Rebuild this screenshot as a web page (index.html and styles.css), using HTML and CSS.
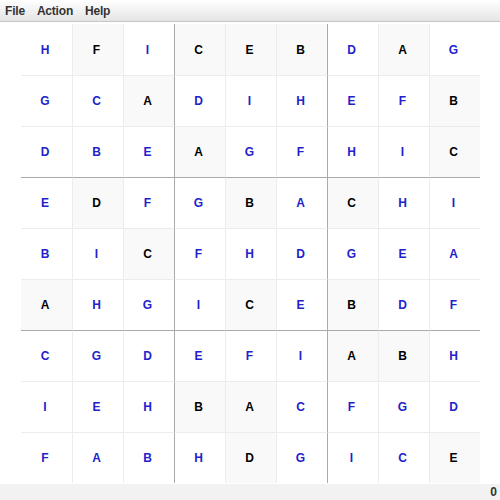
FILE: index.html
```html
<!DOCTYPE html>
<html>
<head>
<meta charset="utf-8">
<link rel="stylesheet" href="styles.css">
</head>
<body>
<div class="app">
  <div class="menubar">
    <span class="menu">File</span>
    <span class="menu">Action</span>
    <span class="menu">Help</span>
  </div>
  <div class="board-area">
    <div class="board">
      <div class="c u">H</div><div class="c g">F</div><div class="c u">I</div><div class="c g">C</div><div class="c g">E</div><div class="c g">B</div><div class="c u">D</div><div class="c g">A</div><div class="c u">G</div>
      <div class="c u">G</div><div class="c u">C</div><div class="c g">A</div><div class="c u">D</div><div class="c u">I</div><div class="c u">H</div><div class="c u">E</div><div class="c u">F</div><div class="c g">B</div>
      <div class="c u">D</div><div class="c u">B</div><div class="c u">E</div><div class="c g">A</div><div class="c u">G</div><div class="c u">F</div><div class="c u">H</div><div class="c u">I</div><div class="c g">C</div>
      <div class="c u">E</div><div class="c g">D</div><div class="c u">F</div><div class="c u">G</div><div class="c g">B</div><div class="c u">A</div><div class="c g">C</div><div class="c u">H</div><div class="c u">I</div>
      <div class="c u">B</div><div class="c u">I</div><div class="c g">C</div><div class="c u">F</div><div class="c u">H</div><div class="c u">D</div><div class="c u">G</div><div class="c u">E</div><div class="c u">A</div>
      <div class="c g">A</div><div class="c u">H</div><div class="c u">G</div><div class="c u">I</div><div class="c g">C</div><div class="c u">E</div><div class="c g">B</div><div class="c u">D</div><div class="c u">F</div>
      <div class="c u">C</div><div class="c u">G</div><div class="c u">D</div><div class="c u">E</div><div class="c u">F</div><div class="c u">I</div><div class="c g">A</div><div class="c g">B</div><div class="c u">H</div>
      <div class="c u">I</div><div class="c u">E</div><div class="c u">H</div><div class="c g">B</div><div class="c g">A</div><div class="c u">C</div><div class="c u">F</div><div class="c u">G</div><div class="c u">D</div>
      <div class="c u">F</div><div class="c u">A</div><div class="c u">B</div><div class="c u">H</div><div class="c g">D</div><div class="c u">G</div><div class="c u">I</div><div class="c u">C</div><div class="c g">E</div>
    </div>
  </div>
  <div class="statusbar"><span class="status">0</span></div>
</div>
</body>
</html>
```
FILE: styles.css
```css
html, body {
  margin: 0;
  padding: 0;
  background: #ffffff;
}
.app {
  width: 500px;
  height: 500px;
  display: flex;
  flex-direction: column;
  font-family: "Liberation Sans", Arial, sans-serif;
  font-weight: bold;
  font-size: 12px;
}
.menubar {
  height: 21px;
  border-bottom: 1px solid #c6c6c6;
  background: linear-gradient(#ffffff, #e4e4e4);
  display: flex;
  align-items: center;
  padding-left: 5px;
  gap: 12px;
  color: #333333;
}
.menu {
  letter-spacing: -0.2px;
}
.board-area {
  flex: 1;
  display: flex;
  justify-content: center;
  padding-top: 2px;
}
.board {
  display: grid;
  grid-template-columns: repeat(9, 51px);
  grid-template-rows: repeat(9, 51px);
  width: 459px;
  height: 459px;
}
.c {
  box-sizing: border-box;
  display: flex;
  align-items: center;
  justify-content: center;
  background: #ffffff;
  font-size: 12px;
  padding-right: 2px;
}
.c.u { color: #2222cc; }
.c.g { color: #000000; background: #f9f9f9; }
.c:not(:nth-child(9n+1)) { border-left: 1px solid #ececec; }
.c:nth-child(9n+4), .c:nth-child(9n+7) { border-left: 1px solid #aaaaaa; }
.c:nth-child(n+10) { border-top: 1px solid #ececec; }
.c:nth-child(n+28):nth-child(-n+36),
.c:nth-child(n+55):nth-child(-n+63) { border-top: 1px solid #aaaaaa; }
.statusbar {
  height: 16px;
  background: #f2f2f2;
  display: flex;
  justify-content: flex-end;
  align-items: center;
  padding-right: 3px;
  color: #333333;
}
```
